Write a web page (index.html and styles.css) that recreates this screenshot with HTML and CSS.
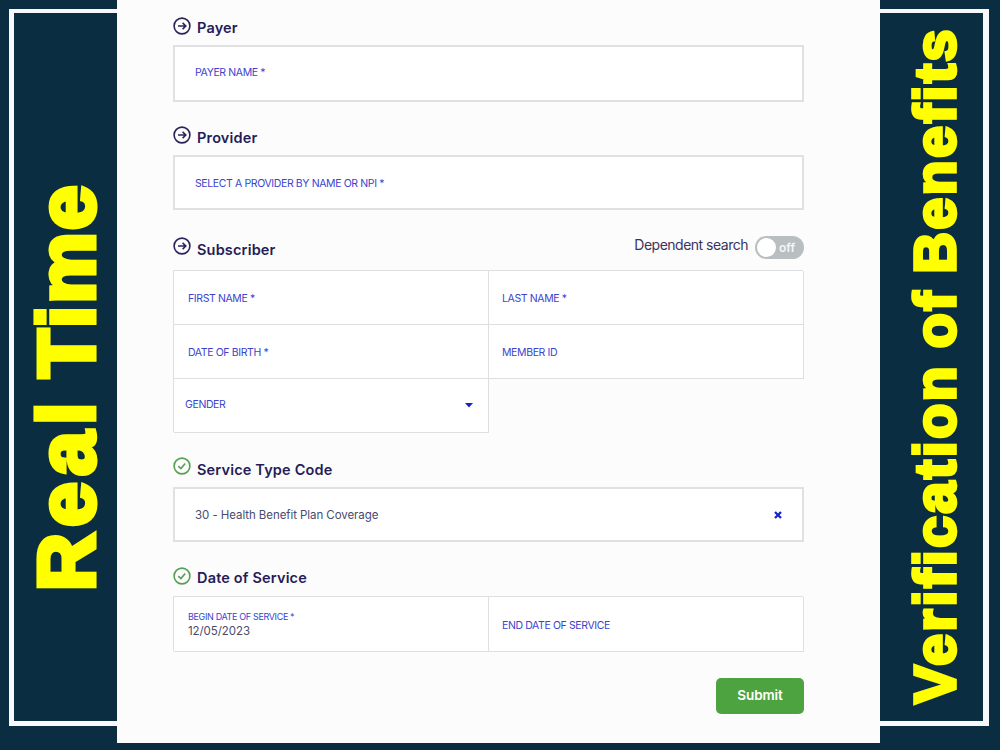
FILE: index.html
```
<!DOCTYPE html>
<html lang="en">
<head>
    <meta charset="UTF-8">
    <meta name="viewport" content="width=device-width, initial-scale=1.0">
    <title>Real Time Verification of Benefits</title>
    <link rel="stylesheet" href="styles.css">
</head>

<body>
    <div class="frame"></div>

    <div class="page">
        <div class="side side-left"><h1 class="title title-left"><span class="real">Real</span> <span class="time">Time</span></h1></div>

        <form class="panel">
            <!-- Payer -->
            <div class="heading">
                <svg class="icon" viewBox="0 0 18 18"><circle cx="9" cy="9" r="7.9"/><path d="M5 9h7.6M9.6 5.9 12.8 9l-3.2 3.1"/></svg>
                <h2>Payer</h2>
            </div>
            <div class="box payer"><span class="label">PAYER NAME *</span></div>

            <!-- Provider -->
            <div class="heading provider-heading">
                <svg class="icon" viewBox="0 0 18 18"><circle cx="9" cy="9" r="7.9"/><path d="M5 9h7.6M9.6 5.9 12.8 9l-3.2 3.1"/></svg>
                <h2>Provider</h2>
            </div>
            <div class="box provider"><span class="label">SELECT A PROVIDER BY NAME OR NPI *</span></div>

            <!-- Subscriber -->
            <div class="heading subscriber-heading">
                <svg class="icon" viewBox="0 0 18 18"><circle cx="9" cy="9" r="7.9"/><path d="M5 9h7.6M9.6 5.9 12.8 9l-3.2 3.1"/></svg>
                <h2>Subscriber</h2>
                <span class="dependent">Dependent search</span>
                <span class="toggle"><span class="knob"></span><span class="off">off</span></span>
            </div>
            <div class="grid">
                <div class="cell"><span class="label">FIRST NAME *</span></div>
                <div class="cell"><span class="label">LAST NAME *</span></div>
                <div class="cell"><span class="label">DATE OF BIRTH *</span></div>
                <div class="cell"><span class="label">MEMBER ID</span></div>
                <div class="cell gender">
                    <span class="label">GENDER</span>
                    <svg class="caret" viewBox="0 0 8 5"><path d="M0 0h8L4 4.5z"/></svg>
                </div>
            </div>

            <!-- Service type -->
            <div class="heading service-heading">
                <svg class="icon done" viewBox="0 0 18 18"><circle cx="9" cy="9" r="7.9"/><path d="m5.3 9.2 2.6 2.4 4.3-5.2"/></svg>
                <h2>Service Type Code</h2>
            </div>
            <div class="box service">
                <span class="value">30 - Health Benefit Plan Coverage</span>
                <svg class="clear" viewBox="0 0 8 8"><path d="m1 1 6 6M7 1 1 7"/></svg>
            </div>

            <!-- Date of service -->
            <div class="heading date-heading">
                <svg class="icon done" viewBox="0 0 18 18"><circle cx="9" cy="9" r="7.9"/><path d="m5.3 9.2 2.6 2.4 4.3-5.2"/></svg>
                <h2>Date of Service</h2>
            </div>
            <div class="grid dates">
                <div class="cell filled">
                    <span class="label small">BEGIN DATE OF SERVICE *</span>
                    <span class="value">12/05/2023</span>
                </div>
                <div class="cell"><span class="label">END DATE OF SERVICE</span></div>
            </div>

            <button class="submit" type="button">Submit</button>
        </form>

        <div class="side side-right"><h1 class="title title-right">Verification of Benefits</h1></div>
    </div>
</body>
</html>
```
FILE: styles.css
```
* {
    box-sizing: border-box;
}

body {
    margin: 0;
    height: 750px;
    overflow: hidden;
    background: #0a2d42;
    font-family: Inter, "Liberation Sans", sans-serif;
}

/* White outline, runs behind the panel */
.frame {
    position: absolute;
    top: 9px;
    left: 9px;
    width: 980px;
    height: 717px;
    border: solid #f6f8fc;
    border-width: 4px 6px 5px 5px;
}

.page {
    position: relative;
    display: grid;
    grid-template-columns: 117px 763px 120px;
    height: 743px;
}

/* Vertical titles */
.side {
    display: flex;
    flex-direction: column;
    align-items: center;
    justify-content: flex-end;
}

.title {
    margin: 0;
    writing-mode: vertical-rl;
    transform: rotate(180deg);
    color: #ffff00;
    font-family: "Liberation Sans", Arial, sans-serif;
    font-weight: bold;
    line-height: 1;
    white-space: nowrap;
}

.title-left {
    font-size: 80px;
    word-spacing: -4px;
    -webkit-text-stroke: 5px #ffff00;
    margin-bottom: 152px;
    margin-left: 17px;
}

.real {
    letter-spacing: 6.5px;
}

.time {
    letter-spacing: 2.4px;
}

.title-right {
    font-size: 57px;
    letter-spacing: 2.7px;
    word-spacing: -3px;
    -webkit-text-stroke: 3.6px #ffff00;
    margin-bottom: 40px;
    margin-right: 10px;
}

.panel {
    background: #fcfcfc;
    padding: 17px 76px 0 56px;
    display: flex;
    flex-direction: column;
}

/* Section headings */
.heading {
    display: flex;
    align-items: flex-start;
    height: 28px;
}

.provider-heading {
    margin-top: 24px;
    height: 29px;
}

.subscriber-heading {
    margin-top: 27px;
    height: 33px;
}

.service-heading {
    margin-top: 25px;
    height: 30px;
}

.date-heading {
    margin-top: 25px;
    height: 29px;
}

.icon {
    width: 18px;
    height: 18px;
    margin-right: 6px;
    fill: none;
    stroke: #2b2458;
    stroke-width: 1.6;
}

.icon.done {
    stroke: #55a052;
}

h2 {
    margin: 2px 0 0;
    font-size: 14.5px;
    line-height: 18px;
    letter-spacing: 0.17px;
    font-weight: 600;
    color: #251c58;
}

.provider-heading h2 {
    margin-top: 3px;
}

.subscriber-heading h2,
.service-heading h2 {
    margin-top: 4px;
}

.dependent {
    margin: -1px 7px 0 auto;
    font-size: 14px;
    line-height: 18px;
    letter-spacing: -0.5px;
    color: #39345f;
}

.toggle {
    display: flex;
    align-items: center;
    width: 49px;
    height: 23px;
    margin-top: -1px;
    padding: 0 2px;
    border-radius: 12px;
    background: #b9bfc0;
}

.knob {
    width: 19px;
    height: 19px;
    border-radius: 50%;
    background: #fff;
}

.off {
    margin-left: 3px;
    font-size: 12px;
    font-weight: 600;
    color: #f4f6f6;
}

/* Fields */
.box {
    display: flex;
    align-items: center;
    height: 55px;
    padding: 0 20px;
    border: 2px solid #e0e1e3;
    background: #fff;
}

.box.payer {
    height: 57px;
    padding-bottom: 1px;
}

.box.provider {
    padding-top: 3px;
}

.box.service {
    padding-top: 2px;
}

.grid {
    display: grid;
    grid-template-columns: 315px 315px;
    grid-auto-rows: 54px;
    margin-right: 1px;
}

.cell {
    display: flex;
    align-items: center;
    padding: 4px 14px 0 15px;
    background: #fff;
    box-shadow: inset 1px 1px 0 #dedfe1, 1px 1px 0 #dedfe1;
}

.cell:nth-child(even) {
    padding-left: 14px;
}

.cell.gender {
    justify-content: space-between;
    padding: 0 15px 0 12px;
}

.dates {
    grid-auto-rows: 55px;
}

.cell.filled {
    flex-direction: column;
    align-items: flex-start;
    justify-content: center;
    padding-top: 1px;
}

.label {
    font-size: 10.5px;
    line-height: 14px;
    letter-spacing: -0.38px;
    color: #3b43cf;
    white-space: nowrap;
}

.label.small {
    font-size: 9px;
    letter-spacing: -0.35px;
}

.value {
    font-size: 11.5px;
    line-height: 15px;
    letter-spacing: -0.07px;
    color: #4a4b6c;
}

.caret {
    width: 8px;
    height: 5px;
    fill: #1722cc;
}

.clear {
    width: 8px;
    height: 8px;
    margin: -2px 0 0 auto;
    stroke: #1722cc;
    stroke-width: 2.3;
}

.submit {
    align-self: flex-end;
    width: 88px;
    height: 36px;
    margin-top: 27px;
    padding: 0 0 3px;
    border: none;
    border-radius: 5px;
    background: #4ea341;
    color: #fff;
    font: 600 13.5px Inter, "Liberation Sans", sans-serif;
    letter-spacing: -0.1px;
}
```
